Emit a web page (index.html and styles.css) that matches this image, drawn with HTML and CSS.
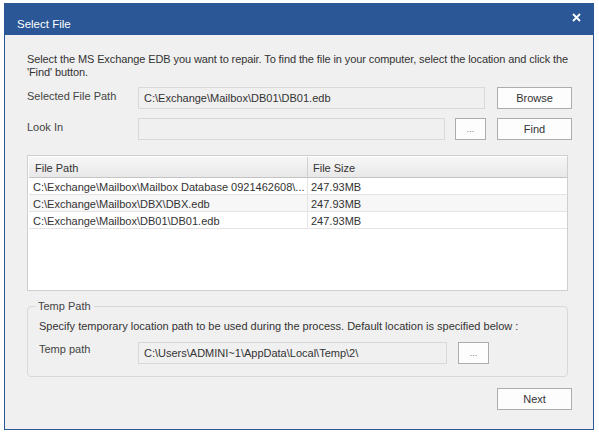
FILE: index.html
```html
<!DOCTYPE html>
<html>
<head>
<meta charset="utf-8">
<link rel="stylesheet" href="styles.css">
</head>
<body>
<div class="dialog">
  <div class="titlebar">
    <span class="title">Select File</span>
    <span class="close">
      <svg width="9" height="9" viewBox="0 0 9 9"><path d="M1 1 L8 8 M8 1 L1 8" stroke="#fff" stroke-width="1.8" fill="none"/></svg>
    </span>
  </div>
  <div class="content">
    <p class="intro">Select the MS Exchange EDB you want to repair. To find the file in your computer, select the location and click the 'Find' button.</p>
    <div class="row">
      <span class="label">Selected File Path</span>
      <div class="input wide">C:\Exchange\Mailbox\DB01\DB01.edb</div>
      <button class="btn">Browse</button>
    </div>
    <div class="row">
      <span class="label">Look In</span>
      <div class="input narrow"></div>
      <button class="btn dots">...</button>
      <button class="btn">Find</button>
    </div>
    <div class="list">
      <div class="lhead">
        <div class="c1">File Path</div>
        <div class="c2">File Size</div>
      </div>
      <div class="lrow">
        <div class="c1">C:\Exchange\Mailbox\Mailbox Database 0921462608\...</div>
        <div class="c2">247.93MB</div>
      </div>
      <div class="lrow alt">
        <div class="c1">C:\Exchange\Mailbox\DBX\DBX.edb</div>
        <div class="c2">247.93MB</div>
      </div>
      <div class="lrow">
        <div class="c1">C:\Exchange\Mailbox\DB01\DB01.edb</div>
        <div class="c2">247.93MB</div>
      </div>
    </div>
    <fieldset class="group">
      <legend>Temp Path</legend>
      <p class="gtext">Specify temporary location path to be used during the process. Default location is specified below :</p>
      <div class="grow">
        <span class="glabel">Temp path</span>
        <div class="input temp">C:\Users\ADMINI~1\AppData\Local\Temp\2\</div>
        <button class="btn dots">...</button>
      </div>
    </fieldset>
    <div class="footer">
      <button class="btn">Next</button>
    </div>
  </div>
</div>
</body>
</html>
```
FILE: styles.css
```css
html, body {
  margin: 0;
  padding: 0;
  background: #ffffff;
}
body {
  font-family: "Liberation Sans", Arial, sans-serif;
  font-size: 11px;
  color: #333333;
}
.dialog {
  margin: 3px 0 0 4px;
  width: 590px;
  height: 427px;
  box-sizing: border-box;
  border: 1px solid #2b5797;
  background: #f0f0f0;
  display: flex;
  flex-direction: column;
}
.titlebar {
  height: 31px;
  background: #2b5797;
  display: flex;
  align-items: center;
  justify-content: space-between;
  padding: 0 12px 0 12px;
  color: #ffffff;
  flex-shrink: 0;
}
.title {
  font-family: "Liberation Sans", Arial, sans-serif;
  font-size: 11.5px;
  margin-top: 9px;
}
.close {
  display: flex;
  margin-top: -5px;
}
.content {
  padding: 0 21px 0 22px;
  display: flex;
  flex-direction: column;
}
.intro {
  margin: 18px 0 8px 0;
  line-height: 13px;
  letter-spacing: -0.1px;
  color: #333;
}
.row {
  display: flex;
  align-items: center;
  height: 22px;
  margin-bottom: 9px;
}
.label {
  width: 111px;
  flex-shrink: 0;
  color: #444;
  align-self: flex-start;
  padding-top: 3px;
}
.input {
  box-sizing: border-box;
  height: 22px;
  border: 1px solid #d9d9d9;
  background: #f0f0f0;
  color: #333;
  padding: 4px 0 0 5px;
  white-space: nowrap;
  overflow: hidden;
}
.input.wide { width: 347px; margin-right: 12px; }
.input.narrow { width: 307px; margin-right: 10px; }
.input.temp { width: 309px; margin-right: 11px; }
.btn {
  box-sizing: border-box;
  height: 22px;
  width: 75px;
  border: 1px solid #adadad;
  background: #fdfdfd;
  font-family: "Liberation Sans", Arial, sans-serif;
  font-size: 11px;
  color: #333;
  padding: 0;
}
.btn.dots {
  width: 31px;
  margin-right: 11px;
  color: #777;
  font-size: 9px;
}
.list {
  margin-top: 6px;
  width: 541px;
  height: 136px;
  box-sizing: border-box;
  border: 1px solid #cfcfcf;
  background: #ffffff;
}
.lhead {
  display: flex;
  height: 21px;
  background: linear-gradient(#f7f7f7, #e8e8e8);
  border-bottom: 1px solid #c4c4c4;
  box-sizing: border-box;
  margin: 1px 0 0 1px;
  color: #333;
}
.lhead .c1 {
  width: 279px;
  padding: 5px 0 0 6px;
  border-right: 1px solid #d0d0d0;
  box-sizing: border-box;
}
.lhead .c2 {
  padding: 5px 0 0 5px;
}
.lrow {
  display: flex;
  height: 17px;
  box-sizing: border-box;
  border-bottom: 1px solid #e4e4e4;
  margin-left: 1px;
}
.lrow.alt { background: #f7f7f7; }
.lrow .c1 {
  width: 279px;
  box-sizing: border-box;
  padding: 3px 0 0 4px;
  border-right: 1px solid #e4e4e4;
  white-space: nowrap;
  overflow: hidden;
}
.lrow .c2 {
  padding: 3px 0 0 3px;
}
.group {
  margin: 9px 0 0 0;
  width: 541px;
  height: 77px;
  box-sizing: border-box;
  border: 1px solid #d8d8d8;
  border-radius: 4px;
  padding: 0 0 0 11px;
}
.group legend {
  padding: 0 3px 0 2px;
  margin-left: -3px;
  color: #444;
}
.gtext {
  margin: 8px 0 9px 0;
  color: #333;
  line-height: 13px;
}
.grow {
  display: flex;
  align-items: center;
  height: 22px;
}
.glabel {
  width: 99px;
  align-self: flex-start;
  padding-top: 1px;
  color: #444;
}
.footer {
  display: flex;
  justify-content: flex-end;
  margin-top: 11px;
}
```
